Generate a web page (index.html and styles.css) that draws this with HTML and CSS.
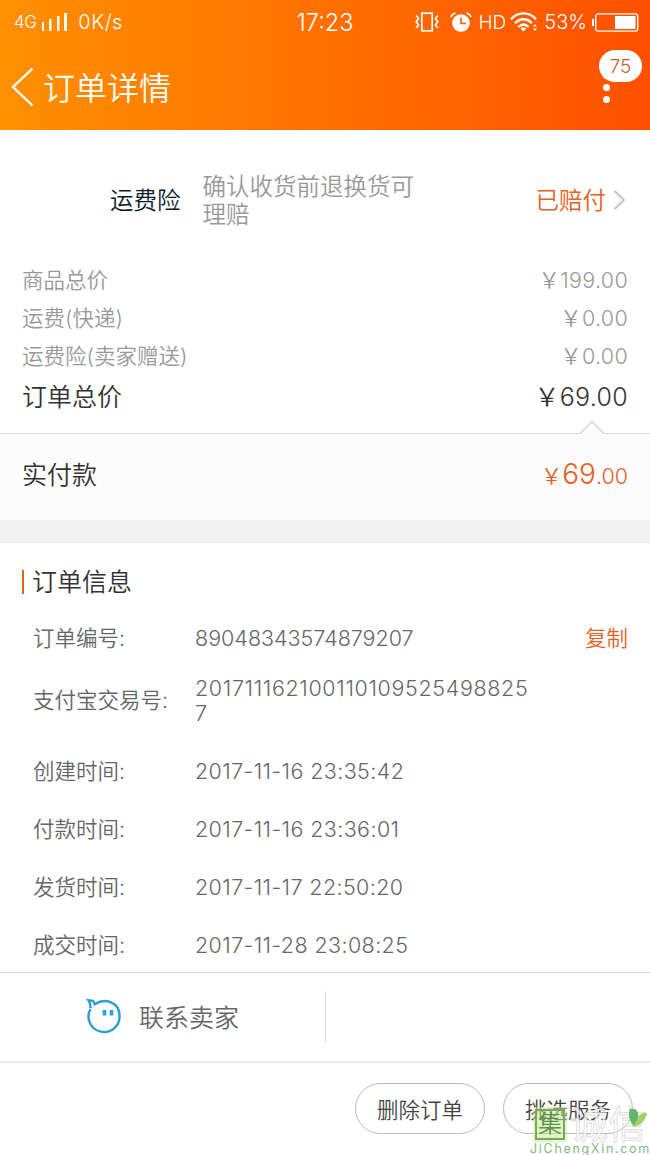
FILE: index.html
```
<!DOCTYPE html>
<html lang="zh-CN">
<head>
    <meta charset="UTF-8">
    <meta name="viewport" content="width=device-width, initial-scale=1.0">
    <title>订单详情</title>
    <link rel="stylesheet" href="styles.css">
</head>
<body>
    <header class="header">
        <div class="status-bar">
            <div class="status-left">
                <span class="network">4G</span>
                <svg class="signal" width="26" height="18" viewBox="0 0 26 18" fill="currentColor">
                    <rect x="0" y="9" width="2" height="9"/>
                    <rect x="7" y="6" width="2.5" height="12"/>
                    <rect x="15" y="3" width="2.5" height="15"/>
                    <rect x="22" y="0" width="3" height="18"/>
                </svg>
                <span class="speed">0K/s</span>
            </div>
            <span class="clock">17:23</span>
            <div class="status-right">
                <svg class="vibrate" width="24" height="20" viewBox="0 0 24 20" fill="none" stroke="currentColor" stroke-width="1.7">
                    <rect x="6.8" y="1.2" width="10.4" height="17.6"/>
                    <path d="M1.2 3.5l2.3 3-2.3 3.2 2.3 3.2-2.3 3M22.8 3.5l-2.3 3 2.3 3.2-2.3 3.2 2.3 3"/>
                </svg>
                <svg class="alarm" width="22" height="20" viewBox="0 0 22 20">
                    <circle cx="11" cy="11" r="8.8" fill="currentColor"/>
                    <path d="M11 5.5v6h5" fill="none" stroke="#ff6200" stroke-width="1.7"/>
                    <path d="M1 5Q2 2 5.5 1M21 5Q20 2 16.5 1" fill="none" stroke="currentColor" stroke-width="1.7"/>
                </svg>
                <span class="hd">HD</span>
                <svg class="wifi" width="28" height="20" viewBox="0 0 28 20" fill="none" stroke="currentColor" stroke-width="2.4">
                    <path d="M1 7.2C8-.6 19-.6 26 7.2M5 11.2C10 6 17 6 22 11.2M8.500 15C12 11.5 15 11.5 18.5 15"/>
                    <path d="M10.500 16.5q3-2.500 6 0l-3 3zM23 14.5l2-2.500 2 2.500zM23 16.500h4l-2 2.500z" fill="currentColor" stroke="none"/>
                </svg>
                <span class="percent">53%</span>
                <svg class="battery" width="47" height="19" viewBox="0 0 47 19" fill="none" stroke="currentColor" stroke-width="1.4">
                    <path d="M1 6v7" stroke-width="2"/>
                    <rect x="3.7" y=".9" width="42" height="17.2" rx="2.5"/>
                    <rect x="23" y="3" width="20.5" height="13" fill="currentColor" stroke="none"/>
                </svg>
            </div>
        </div>
        <div class="nav">
            <svg class="back" width="24" height="40" viewBox="0 0 24 40" fill="none" stroke="currentColor" stroke-width="2.4">
                <path d="M21.500 1.5L2 20l19.5 18.5"/>
            </svg>
            <h1 class="title">订单详情</h1>
            <div class="more">
                <i class="dot"></i>
                <i class="dot"></i>
                <i class="dot"></i>
                <span class="badge">75</span>
            </div>
        </div>
    </header>

    <section class="insurance">
        <span class="insurance-name">运费险</span>
        <span class="insurance-desc">确认收货前退换货可理赔</span>
        <span class="insurance-state">已赔付</span>
        <svg class="arrow" width="13" height="20" viewBox="0 0 13 20" fill="none" stroke="#c4c4c4" stroke-width="2">
            <path d="M1.5 1L11 10l-9.5 9"/>
        </svg>
    </section>

    <section class="prices">
        <div class="price-row"><span>商品总价</span><span class="amount">￥199.00</span></div>
        <div class="price-row"><span>运费(快递)</span><span class="amount">￥0.00</span></div>
        <div class="price-row"><span>运费险(卖家赠送)</span><span class="amount">￥0.00</span></div>
        <div class="price-row total"><span>订单总价</span><span class="amount">￥69.00</span></div>
    </section>

    <section class="paid">
        <svg class="notch" width="26" height="14" viewBox="0 0 26 14">
            <path d="M1 13L13 1.5 25 13v1H1z" fill="#fcfcfc"/>
            <path d="M0 13.5h1L13 1.5 25 13.5h1" fill="none" stroke="#d4d4d4" stroke-width="1.3"/>
        </svg>
        <span>实付款</span>
        <span class="paid-amount">￥<b>69</b>.00</span>
    </section>

    <!-- Order info -->
    <section class="info">
        <h2 class="info-title">订单信息</h2>
        <div class="info-row">
            <span class="label">订单编号:</span>
            <span class="value">89048343574879207</span>
            <a class="copy">复制</a>
        </div>
        <div class="info-row trade">
            <span class="label">支付宝交易号:</span>
            <span class="value">2017111621001101095254988257</span>
        </div>
        <div class="info-row"><span class="label">创建时间:</span><span class="value time">2017-11-16 23:35:42</span></div>
        <div class="info-row"><span class="label">付款时间:</span><span class="value time">2017-11-16 23:36:01</span></div>
        <div class="info-row"><span class="label">发货时间:</span><span class="value time">2017-11-17 22:50:20</span></div>
        <div class="info-row"><span class="label">成交时间:</span><span class="value time">2017-11-28 23:08:25</span></div>
    </section>

    <section class="contact">
        <div class="contact-seller">
            <svg class="wangwang" width="36" height="36" viewBox="0 0 36 36" fill="none" stroke="#2a9fd6" stroke-width="2.4">
                <path d="M4.600 10Q4.500 5 2.500 2.200l4.500.6 1.800 3.400C19-.5 33.500 4 33.500 17.500a15.500 15.500 0 1 1-29-6.500"/>
                <path d="M18.500 12v5.500M25.500 12v5.500" stroke-width="3.6"/>
            </svg>
            <span>联系卖家</span>
        </div>
    </section>

    <footer class="actions">
        <button class="btn">删除订单</button>
        <button class="btn">挑选服务</button>
        <div class="watermark">
            <div class="mark-top">
                <span class="mark-box">集</span>
                <span class="mark-name">诚信</span>
                <svg class="leaf" width="18" height="20" viewBox="0 0 18 20">
                    <path d="M1 1C7 0 10 4 9 9c3-4 6-5 9-4-1 6-5 12-13 14C0 14-1 6 1 1z" fill="#9bd36a"/>
                    <path d="M1 1C7 0 10 4 9 9l-4 8C0 13-1 6 1 1z" fill="#63b56c"/>
                </svg>
            </div>
            <div class="mark-url">JiChengXin.com</div>
        </div>
    </footer>
</body>
</html>
```
FILE: styles.css
```
* {
    box-sizing: border-box;
}
body {
    margin: 0;
    font-family: Inter, "Noto Sans CJK SC", sans-serif;
    font-weight: 350;
    font-size: 21.5px;
    color: #666;
    background: #fff;
}
svg {
    display: block;
    flex: none;
}
.header {
    height: 130px;
    color: #fff;
    background: linear-gradient(to right, #ff9000, #ff5000);
}
.status-bar {
    display: flex;
    align-items: center;
    height: 44px;
    padding: 0 11px 0 14px;
}
.status-left, .status-right {
    display: flex;
    flex: 1;
    align-items: center;
}
.network {
    font-size: 17px;
    letter-spacing: -0.5px;
}
.signal {
    margin: 0 10px 0 6px;
}
.speed {
    font-size: 20px;
    letter-spacing: 0.5px;
}
.clock {
    margin-right: 3px;
    font-size: 23.5px;
}
.status-right {
    justify-content: flex-end;
    font-size: 20px;
}
.alarm {
    margin: 0 7px 0 11px;
}
.hd {
    font-size: 19px;
}
.wifi {
    margin: 0 6px 0 4px;
}
.battery {
    margin-left: 5px;
}
.nav {
    display: flex;
    align-items: center;
    height: 86px;
    padding: 0 40px 0 11px;
}
.title {
    flex: 1;
    margin: -3px 0 0 8px;
    font-size: 32px;
    font-weight: 350;
}
.more {
    position: relative;
    display: flex;
    flex-direction: column;
    gap: 5px;
}
.dot {
    width: 7px;
    height: 7px;
    border-radius: 50%;
    background: #fff;
}
.badge {
    position: absolute;
    left: -4px;
    top: -22px;
    width: 43px;
    height: 32px;
    border-radius: 16px;
    background: #fff;
    color: #c9602f;
    font-size: 19px;
    line-height: 33px;
    text-align: center;
}
.insurance {
    display: flex;
    align-items: center;
    height: 131px;
    padding: 11px 24px 0 110px;
    font-size: 23.5px;
    line-height: 28px;
}
.insurance-name {
    color: #051b28;
}
.insurance-desc {
    width: 220px;
    margin-left: 22px;
    color: #999;
}
.insurance-state {
    margin-left: auto;
    color: #e4601f;
}
.arrow {
    margin: -2px 0 0 7px;
}
.prices {
    height: 172px;
    padding: 0 22px;
    color: #999;
}
.price-row {
    display: flex;
    justify-content: space-between;
    height: 38px;
    line-height: 38px;
}
.amount {
    letter-spacing: 0.3px;
}
.total {
    height: 44px;
    line-height: 44px;
    font-size: 25px;
    color: #333;
}
.paid {
    position: relative;
    display: flex;
    justify-content: space-between;
    height: 87px;
    padding: 0 22px;
    border-top: 1px solid #dedede;
    background: #fcfcfc;
    font-size: 25px;
    line-height: 82px;
    color: #333;
}
.notch {
    position: absolute;
    left: 579px;
    top: -14px;
}
.paid-amount {
    font-size: 21.5px;
    line-height: 81px;
    color: #e4601f;
}
.paid-amount b {
    font-size: 28px;
    font-weight: 350;
}
.info {
    height: 452px;
    padding: 25px 22px 0;
    border-top: 23px solid #f1f1f1;
}
.info-title {
    display: flex;
    align-items: center;
    height: 28px;
    margin: 0 0 14px;
    font-size: 25px;
    font-weight: 350;
    line-height: 26px;
    color: #333;
}
.info-title::before {
    content: "";
    width: 2px;
    height: 24px;
    margin-right: 8px;
    background: #e4601f;
}
.info-row {
    display: flex;
    align-items: center;
    height: 57.8px;
    padding-left: 11px;
    line-height: 25px;
}
.label {
    width: 162px;
}
.value {
    width: 340px;
    word-break: break-all;
}
.time {
    letter-spacing: 0.4px;
}
.copy {
    margin-left: auto;
    color: #e4601f;
}
.trade {
    height: 66px;
    margin-bottom: 9px;
}
.trade .value {
    letter-spacing: 0.65px;
}
.contact {
    height: 91px;
    padding-top: 18px;
    border-top: 1px solid #d8d8d8;
    border-bottom: 2px solid #ebebeb;
}
.contact-seller {
    display: flex;
    align-items: center;
    width: 326px;
    height: 52px;
    padding: 0 0 2px 86px;
    border-right: 1px solid #ddd;
    font-size: 25px;
}
.contact-seller span {
    margin-left: 17px;
}
.actions {
    position: relative;
    display: flex;
    justify-content: flex-end;
    gap: 18px;
    height: 92px;
    padding: 20px 17px 0 0;
}
.btn {
    width: 130px;
    height: 51px;
    padding: 0;
    border: 1px solid #bbb;
    border-radius: 26px;
    background: none;
    font: inherit;
    color: #444;
}
.watermark {
    position: absolute;
    right: 0;
    top: 43px;
    width: 120px;
}
.mark-top {
    position: relative;
    display: flex;
    align-items: center;
    height: 36px;
    padding-left: 5px;
}
.mark-box {
    width: 30px;
    height: 31px;
    border: 2px solid #7ba564;
    outline: 2px solid rgba(200, 240, 140, 0.5);
    background: rgba(190, 238, 130, 0.5);
    font-size: 24px;
    line-height: 26px;
    text-align: center;
    color: #5d8f50;
}
.mark-name {
    margin-left: 5px;
    font-size: 38px;
    font-weight: 400;
    line-height: 36px;
    color: rgba(255, 255, 255, 0.8);
    -webkit-text-stroke: 1px rgba(190, 190, 190, 0.5);
}
.leaf {
    position: absolute;
    right: 3px;
    top: 2px;
}
.mark-url {
    font-size: 12.5px;
    font-weight: 400;
    line-height: 14px;
    letter-spacing: 1.7px;
    white-space: nowrap;
    color: #7fb883;
}
```
